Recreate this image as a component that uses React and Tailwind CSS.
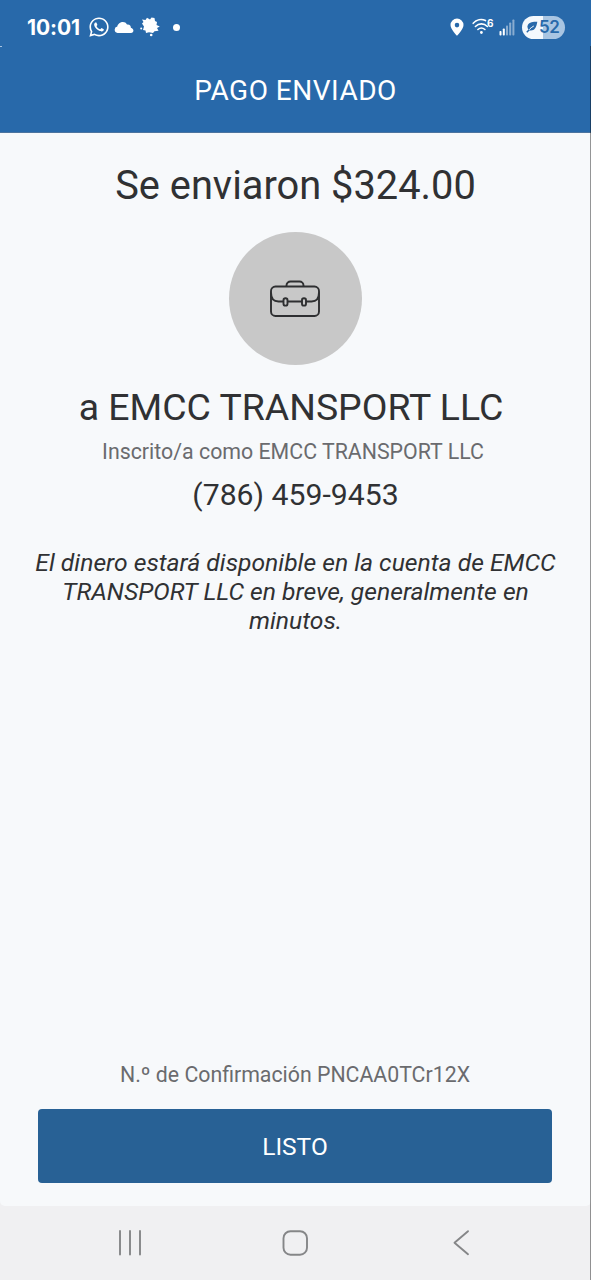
import React from 'react';
import { FaWhatsapp } from 'react-icons/fa';

const payment = {
  amount: '$324.00',
  recipient: 'EMCC TRANSPORT LLC',
  phone: '(786) 459-9453',
  confirmation: 'PNCAA0TCr12X',
};

function StatusBar() {
  return (
    <div className="h-[54px] pl-[26px] pr-[26px] flex items-center justify-between text-white">
      <div className="flex items-center">
        <span className="w-[62px] pl-px font-['Inter'] text-[21px] leading-none font-bold tracking-[-0.1px]">10:01</span>
        <FaWhatsapp className="w-[22px] h-[22px]" />
        <svg className="w-5 h-3 ml-[4px]" viewBox="0 0 20 12" fill="currentColor">
          <path d="M3.500 12A3.300 3.300 0 0 1 3.300 5.500C4 1 11 -1 13 3.600 16.500 3.300 17 6 16.800 6.700 20.500 7.500 20 12 17 12Z" />
        </svg>
        <svg className="w-5 h-5 ml-[6px]" viewBox="0 0 20 20" fill="currentColor">
          <path d="M2 2.500 5.500 3 7 .8 10 2.500 11.500.5 14.500 1 15 4 17 5 16.500 8 19.800 9.500 17 11 18.500 13.800 14.500 14.300 13 16 9 15.300 6 16 5.500 13.500 3 13 4 9.500 2 6.500 3.500 5Z" />
          <circle cx="1.200" cy="11.500" r="1" />
          <circle cx="11.200" cy="18" r="1.300" />
        </svg>
        <span className="w-[7px] h-[7px] ml-[13px] rounded-full bg-white" />
      </div>

      <div className="flex items-center">
        <svg className="w-[14px] h-[18px]" viewBox="0 0 14 18" fill="currentColor">
          <path fillRule="evenodd" d="M7 .5A6.500 6.500 0 0 0 .5 7c0 4.500 6.500 10.700 6.500 10.700S13.500 11.500 13.500 7A6.500 6.500 0 0 0 7 .5Zm0 4.300a2.300 2.300 0 1 1 0 4.600 2.300 2.300 0 0 1 0-4.600Z" />
        </svg>
        <svg className="w-[22px] h-[18px] ml-2" viewBox="0 0 22 18" fill="none" stroke="currentColor">
          <path d="M1.200 5.300C4.500 1.600 9.500.8 13.500 2.600M3.400 8.500c3.500-3.500 8.500-3.500 12 0M5.900 11.500c2.200-1.900 4.800-1.900 7 0" strokeWidth="1.600" strokeLinecap="round" />
          <circle cx="9.400" cy="14.500" r="1.400" fill="currentColor" stroke="none" />
          <text x="15" y="8.600" fill="currentColor" stroke="none" className="font-['Inter'] text-[10px] font-bold">6</text>
        </svg>
        <svg className="w-4 h-[17px] ml-[5px]" viewBox="0 0 16 17" fill="currentColor">
          <rect x="0.500" y="12" width="2" height="4.500" rx=".7" />
          <rect x="3.800" y="9.500" width="2" height="7" rx=".7" />
          <rect x="7" y="6.500" width="2" height="10" rx=".7" opacity=".45" />
          <rect x="10.200" y="3.500" width="2" height="13" rx=".7" opacity=".45" />
          <rect x="13.400" y="0.500" width="2" height="16" rx=".7" opacity=".45" />
        </svg>
        <div className="w-[43px] h-[23px] ml-[7px] pl-[4px] rounded-full bg-linear-to-r from-[#f4f9fd] from-50% to-[#a9c5e2] to-50% flex items-center text-[#2869aa]">
          <svg className="w-[12px] h-[12px]" viewBox="0 0 11 12" fill="none">
            <path d="M10.800.8C7 .5 1.500 1 1 5.300.9 7 1.500 8.500 2.600 9.300 7.500 10.500 9.800 7 10.800.8Z" fill="currentColor" />
            <path d="M.8 11C2 8.800 4.500 6.600 7.300 5" stroke="#f4f9fd" strokeWidth="1" />
            <path d="M.3 11.300 2.700 8.800" stroke="currentColor" strokeWidth="1.500" />
          </svg>
          <span className="ml-[1px] font-['Inter'] text-[17px] leading-none font-semibold tracking-[-0.4px]">52</span>
        </div>
      </div>
    </div>
  );
}

function Briefcase() {
  return (
    <svg className="w-[52px] h-[40px] mr-px mt-px" viewBox="0 0 52 40" fill="none" stroke="#2e2f31" strokeWidth="1.900">
      <rect x="2" y="7.500" width="48" height="29.500" rx="4.500" />
      <path d="M17.500 7.500V6.500a4 4 0 0 1 4-4h9a4 4 0 0 1 4 4v1" />
      <path d="M2 13.500c0 6 3 9 7.500 9h5M18.500 22.500h14.500M37 22.500h5.500c4.500 0 7.500-3 7.500-9" />
      <rect x="14.500" y="19.300" width="4" height="7.300" rx="1.900" />
      <rect x="33" y="19.300" width="4" height="7.300" rx="1.900" />
    </svg>
  );
}

function NavBar() {
  return (
    <nav className="h-[74px] flex items-center text-[#858688]">
      <svg className="w-[26px] h-[28px] ml-[117px]" viewBox="0 0 26 28" stroke="currentColor" strokeWidth="1.900" strokeLinecap="round">
        <path d="M3 2v23.500M13 2v23.500M23 2v23.500" />
      </svg>
      <svg className="w-[28px] h-[28px] ml-[138px]" viewBox="0 0 28 28" fill="none" stroke="currentColor" strokeWidth="1.900">
        <rect x="2.500" y="2.200" width="23.500" height="23.500" rx="7" />
      </svg>
      <svg className="w-[18px] h-[28px] ml-[143px]" viewBox="0 0 18 28" fill="none" stroke="currentColor" strokeWidth="1.900" strokeLinecap="round" strokeLinejoin="round">
        <path d="M16 2.200 2.500 13.700 16 25.200" />
      </svg>
    </nav>
  );
}

export default function App() {
  return (
    <div className="relative w-[591px] h-[1280px] overflow-hidden bg-[#f0f0f2] font-['Roboto',sans-serif] text-[#303133] flex flex-col">
      <header className="h-[133px] bg-[#2869aa] border-b border-[#4c749f] text-white">
        <StatusBar />
        <h1 className="h-[73px] pt-px flex items-center justify-center text-[28px] tracking-[0.5px]">PAGO ENVIADO</h1>
      </header>

      <main className="flex-1 rounded-b-[5px] bg-[#f7f9fb] flex flex-col items-center text-center">
        <p className="mt-[28px] text-[39.8px] leading-[50px]">Se enviaron {payment.amount}</p>
        <div className="mt-[21px] w-[133px] h-[133px] rounded-full bg-[#c8c8c8] flex items-center justify-center">
          <Briefcase />
        </div>
        <h2 className="mt-[17px] mr-[9px] text-[37.4px] leading-[50px]">a {payment.recipient}</h2>
        <p className="mt-[5px] mr-[5px] text-[21.350px] leading-[30px] text-[#6a6b6e]">Inscrito/a como {payment.recipient}</p>
        <p className="mt-[8px] text-[30.2px] leading-[40px]">{payment.phone}</p>
        <p className="mt-[33px] w-[540px] text-[24.700px] leading-[29px] italic">
          El dinero estará disponible en la cuenta de {payment.recipient} en breve, generalmente en minutos.
        </p>

        <div className="mt-auto mb-[23px] mr-px w-[514px]">
          <p className="mb-[19px] text-[21.3px] leading-[30px] text-[#6a6b6e]">
            N.º de Confirmación {payment.confirmation}
          </p>
          <button type="button" className="block w-full h-[74px] pt-[3px] rounded-[4px] bg-[#286195] text-white text-[24.5px]">
            LISTO
          </button>
        </div>
      </main>

      <NavBar />

      {/* thin screen edge over the right side */}
      <div className="absolute top-[46px] right-0 bottom-0 w-px bg-black/40" />
      <div className="absolute top-[46px] left-0 w-[2px] h-px bg-[#a9c5e2]" />
    </div>
  );
}
